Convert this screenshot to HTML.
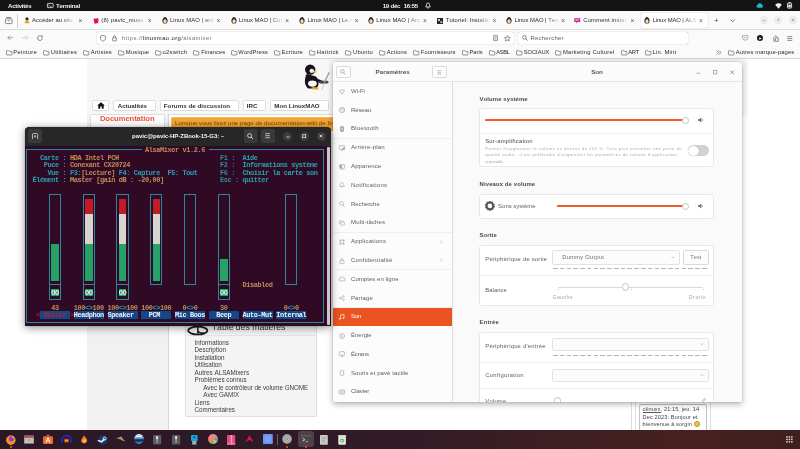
<!DOCTYPE html>
<html lang="fr"><head><meta charset="utf-8"><title>Linux MAO | ALSAMixer</title>
<style>
html,body{margin:0;padding:0}
body{width:800px;height:449px;overflow:hidden;position:relative;background:#fff;font-family:"Liberation Sans",sans-serif;font-kerning:none;-webkit-font-smoothing:antialiased}
#root{position:absolute;left:0;top:0;width:800px;height:449px;overflow:hidden;will-change:transform}
#root div,#root span.t,#root svg{position:absolute;box-sizing:border-box}
span.t{white-space:pre;display:block}
svg{overflow:visible}
</style></head><body><div id="root">
<div style="left:87.2px;top:58.5px;width:661px;height:56px;background:#f7f7f7;"></div>
<div style="left:87.2px;top:114px;width:81.3px;height:317px;background:#f1f1f1;"></div>
<div style="left:168.2px;top:114px;width:0.7px;height:317px;background:#d6d6d6;"></div>
<div style="left:91.9px;top:100.2px;width:17.5px;height:10.8px;background:#fff;border:0.6px solid #dcdcdc;border-radius:1.6px;"></div>
<svg style="left:96.6px;top:102.2px;" width="8" height="7" viewBox="0 0 8 7"><path d="M4 0.3 L0.2 3.6 H1.3 V6.8 H3.2 V4.6 H4.8 V6.8 H6.7 V3.6 H7.8 Z" fill="#111"/></svg>
<div style="left:113.4px;top:100.2px;width:42.3px;height:10.8px;background:#fff;border:0.6px solid #dcdcdc;border-radius:1.6px;"></div>
<span class="t" style="left:117.7px;top:102.08px;font-size:6.2px;line-height:7.44px;color:#333;font-weight:700;letter-spacing:-0.03px;">Actualités</span>
<div style="left:159.7px;top:100.2px;width:78.9px;height:10.8px;background:#fff;border:0.6px solid #dcdcdc;border-radius:1.6px;"></div>
<span class="t" style="left:163.8px;top:102.08px;font-size:6.2px;line-height:7.44px;color:#333;font-weight:700;letter-spacing:0.03px;">Forums de discussion</span>
<div style="left:242.5px;top:100.2px;width:23.7px;height:10.8px;background:#fff;border:0.6px solid #dcdcdc;border-radius:1.6px;"></div>
<span class="t" style="left:246.7px;top:102.08px;font-size:6.2px;line-height:7.44px;color:#333;font-weight:700;letter-spacing:0.01px;">IRC</span>
<div style="left:270.1px;top:100.2px;width:58.5px;height:10.8px;background:#fff;border:0.6px solid #dcdcdc;border-radius:1.6px;"></div>
<span class="t" style="left:274.3px;top:102.08px;font-size:6.2px;line-height:7.44px;color:#333;font-weight:700;letter-spacing:0px;">Mon LinuxMAO</span>
<div style="left:89.8px;top:113.6px;width:74.9px;height:20px;background:#fff;border:0.6px solid #dedede;border-radius:1.5px 1.5px 0 0;"></div>
<span class="t" style="left:99.9px;top:113.84px;font-size:7.6px;line-height:9.12px;color:#f0503c;font-weight:700;letter-spacing:-0.05px;">Documentation</span>
<div style="left:168.6px;top:114px;width:574px;height:0.7px;background:#dcdcdc;"></div>
<div style="left:171.2px;top:116.5px;width:175px;height:14px;background:#f6a730;border:0.8px solid #f3b55e;border-radius:1.2px;overflow:hidden;"></div>
<span class="t" style="left:175px;top:118.68px;font-size:6.2px;line-height:7.44px;color:#6e4a18;">Lorsque vous lisez une page de documentation-wiki de linuxmao.org, vous</span>
<svg style="left:300px;top:62px;" width="34" height="32" viewBox="300 62 34 32"><circle cx="310.2" cy="69.6" r="5.2" fill="#15131c"/><ellipse cx="311.8" cy="70.9" rx="2.3" ry="2.1" fill="#f4f4f4"/><path d="M313.9 70.6 L317.4 72 L314 73.2z" fill="#f4a51c"/><path d="M307.2 74 C304 78 304 85 308 88.4 L316 88.6 C319.5 86 319.5 80 316 76.5 Z" fill="#15131c"/><ellipse cx="312.4" cy="83.6" rx="4.4" ry="3.1" fill="#f7f7f7"/><path d="M307 76 L321.8 82" stroke="#15131c" stroke-width="2.8" stroke-linecap="round"/><path d="M320.4 82.2 h6.6" stroke="#4a4a4e" stroke-width="2.8" stroke-linecap="round"/><path d="M329.3 72.3 L324.4 82.2" stroke="#9a9a9e" stroke-width="1.3"/><path d="M324.6 82.6 L321.8 90" stroke="#b4b4b8" stroke-width="0.7"/><path d="M311.5 87.2 h6.6 l0.6 2.3 h-6z" fill="#f4a51c"/></svg>
<div style="left:185px;top:320px;width:132.4px;height:97.3px;background:#f4f4f4;border:0.6px solid #e0e0e0;border-radius:1px;"></div>
<div style="left:185.5px;top:335px;width:131.4px;height:0.5px;background:#e6e6e6;"></div>
<span class="t" style="left:211.8px;top:322.24px;font-size:8.6px;line-height:10.32px;color:#333;letter-spacing:0.03px;">Table des matières</span>
<svg style="left:187.3px;top:324.6px;" width="22" height="10" viewBox="0 0 22 10"><ellipse cx="10.8" cy="5.6" rx="9.6" ry="3.9" fill="none" stroke="#1c1c1c" stroke-width="1.7"/><path d="M10.8 0.6 v9 M10.8 5.4 a4 3 0 0 0 6 2.2" stroke="#1c1c1c" stroke-width="1.4" fill="none"/></svg>
<span class="t" style="left:194.5px;top:338.82px;font-size:6.3px;line-height:7.56px;color:#404040;letter-spacing:-0.02px;">Informations</span>
<span class="t" style="left:194.5px;top:346.32px;font-size:6.3px;line-height:7.56px;color:#404040;">Description</span>
<span class="t" style="left:194.5px;top:353.82px;font-size:6.3px;line-height:7.56px;color:#404040;">Installation</span>
<span class="t" style="left:194.5px;top:361.32px;font-size:6.3px;line-height:7.56px;color:#404040;">Utilisation</span>
<span class="t" style="left:194.5px;top:368.82px;font-size:6.3px;line-height:7.56px;color:#404040;">Autres ALSAMixers</span>
<span class="t" style="left:194.5px;top:376.32px;font-size:6.3px;line-height:7.56px;color:#404040;">Problèmes connus</span>
<span class="t" style="left:203.2px;top:383.82px;font-size:6.3px;line-height:7.56px;color:#404040;letter-spacing:-0.05px;">Avec le contrôleur de volume GNOME</span>
<span class="t" style="left:203.2px;top:391.32px;font-size:6.3px;line-height:7.56px;color:#404040;">Avec GAMIX</span>
<span class="t" style="left:194.5px;top:398.82px;font-size:6.3px;line-height:7.56px;color:#404040;">Liens</span>
<span class="t" style="left:194.5px;top:406.32px;font-size:6.3px;line-height:7.56px;color:#404040;letter-spacing:-0.04px;">Commentaires</span>
<div style="left:631px;top:395px;width:0.6px;height:35px;background:#ddd;"></div>
<div style="left:635.4px;top:395px;width:0.6px;height:35px;background:#e2e2e2;"></div>
<div style="left:710.4px;top:395px;width:0.6px;height:35px;background:#ddd;"></div>
<div style="left:639.4px;top:403.7px;width:67.5px;height:30px;background:#fff;border:0.7px solid #c4c4c4;border-radius:2px;"></div>
<span class="t" style="left:642.6px;top:406.34px;font-size:5.6px;line-height:6.72px;color:#444;letter-spacing:0.09px;">olinuxx, 21:15, jeu. 14</span>
<div style="left:642.6px;top:412.3px;width:18.8px;height:0.5px;background:#555;"></div>
<span class="t" style="left:642.6px;top:413.54px;font-size:5.6px;line-height:6.72px;color:#444;letter-spacing:0.12px;">Dec 2023: Bonjour et</span>
<span class="t" style="left:642.6px;top:420.94px;font-size:5.6px;line-height:6.72px;color:#444;letter-spacing:0.12px;">bienvenue à sorgin</span>
<div style="left:694.3px;top:421.1px;width:6px;height:6px;background:#f3c93a;border-radius:50%;border:0.4px solid #b8902a;"></div>
<div style="left:0px;top:0px;width:800px;height:10.7px;background:#141414;"></div>
<span class="t" style="left:8px;top:1.59px;font-size:6.1px;line-height:7.32px;color:#f2f2f2;font-weight:700;letter-spacing:-0.22px;">Activités</span>
<svg style="left:47.2px;top:3.3px;" width="6.6" height="5" viewBox="0 0 6.6 5"><rect x="0.4" y="0.4" width="5.8" height="4.2" rx="0.7" fill="none" stroke="#eee" stroke-width="0.8"/><path d="M1.5 1.5 l1.1 0.9 l-1.1 0.9 M3.2 3.4 h1.5" stroke="#eee" stroke-width="0.6" fill="none"/></svg>
<span class="t" style="left:56px;top:1.59px;font-size:6.1px;line-height:7.32px;color:#f2f2f2;font-weight:700;letter-spacing:-0.18px;">Terminal</span>
<span class="t" style="left:382.7px;top:1.59px;font-size:6.1px;line-height:7.32px;color:#f2f2f2;font-weight:700;letter-spacing:-0.25px;">19 déc</span>
<span class="t" style="left:403.7px;top:1.59px;font-size:6.1px;line-height:7.32px;color:#f2f2f2;font-weight:700;letter-spacing:-0.26px;">16:55</span>
<svg style="left:425.4px;top:2px;" width="6" height="7.2" viewBox="0 0 6 7.2"><path d="M3 0.9 C1.8 0.9 1.5 2 1.5 3.2 L0.7 5 H5.3 L4.5 3.2 C4.5 2 4.2 0.9 3 0.9 Z" fill="none" stroke="#eee" stroke-width="0.85" stroke-linejoin="round"/><path d="M2.3 6 h1.4" stroke="#eee" stroke-width="0.9"/></svg>
<svg style="left:755.6px;top:3.2px;" width="8" height="4.8" viewBox="0 0 8 4.8"><path d="M1.7 4.7 a1.55 1.55 0 0 1 0 -3 a2.3 2.3 0 0 1 4.4 0.4 a1.35 1.35 0 0 1 -0.2 2.6 z" fill="#1fb8d4"/></svg>
<svg style="left:774.5px;top:2.8px;" width="7" height="6" viewBox="0 0 7 6"><path d="M3.5 5.7 L0.2 1.8 A5 5 0 0 1 6.8 1.8 Z" fill="#f2f2f2"/></svg>
<svg style="left:787px;top:2px;" width="5.2" height="6.6" viewBox="0 0 5.2 6.6"><rect x="0.5" y="1" width="4.1" height="5.1" rx="0.7" fill="none" stroke="#f2f2f2" stroke-width="0.9"/><rect x="1.6" y="0.1" width="1.9" height="0.9" fill="#f2f2f2"/><rect x="1.3" y="2.6" width="2.5" height="2.7" fill="#f2f2f2"/></svg>
<div style="left:0px;top:10.7px;width:800px;height:47.8px;background:#fafafa;"></div>
<div style="left:0px;top:29px;width:800px;height:0.6px;background:#dcdcdc;"></div>
<div style="left:0px;top:58.2px;width:800px;height:0.6px;background:#d4d4d4;"></div>
<svg style="left:5px;top:17px;" width="7.5" height="7" viewBox="0 0 7.5 7"><rect x="0.4" y="1.8" width="6.7" height="4.8" rx="0.9" fill="none" stroke="#5b5b66" stroke-width="0.75"/><path d="M1.3 0.5 h4.9" stroke="#5b5b66" stroke-width="0.75"/><path d="M2.6 3.8 h2.3" stroke="#5b5b66" stroke-width="0.7"/></svg>
<div style="left:17.3px;top:14px;width:0.6px;height:14px;background:#d0d0d0;"></div>
<div style="left:640.5px;top:12.6px;width:67.5px;height:15.4px;background:#fff;border-radius:1.8px;box-shadow:0 0 1px rgba(0,0,0,.45);"></div>
<svg style="left:24px;top:17.3px;" width="6" height="6.5" viewBox="0 0 6 6.5"><circle cx="3" cy="1.9" r="1.6" fill="#3a2a1a"/><path d="M0.6 6.2 a2.4 2.6 0 0 1 4.8 0z" fill="#e8a23a"/></svg>
<span class="t" style="left:32px;top:17.46px;font-size:5.9px;line-height:7.08px;color:#2b2b33;letter-spacing:0.02px;-webkit-mask-image:linear-gradient(to right,#000 72%,rgba(0,0,0,.15) 100%);mask-image:linear-gradient(to right,#000 72%,rgba(0,0,0,.15) 100%);">Accéder au site</span>
<span class="t" style="left:78.47px;top:17.04px;font-size:6.6px;line-height:7.92px;color:#55555f;">×</span>
<svg style="left:92.5px;top:17.5px;" width="6" height="6" viewBox="0 0 6 6"><path d="M0.5 0.8 L5.5 0.3 L5.2 5 L1.5 5.7z" fill="#e0143c"/></svg>
<span class="t" style="left:101.3px;top:17.46px;font-size:5.9px;line-height:7.08px;color:#2b2b33;letter-spacing:0.16px;-webkit-mask-image:linear-gradient(to right,#000 72%,rgba(0,0,0,.15) 100%);mask-image:linear-gradient(to right,#000 72%,rgba(0,0,0,.15) 100%);">(8) pavic_muse</span>
<span class="t" style="left:147.77px;top:17.04px;font-size:6.6px;line-height:7.92px;color:#55555f;">×</span>
<svg style="left:162px;top:17.3px;" width="6" height="6.5" viewBox="0 0 6 6.5"><ellipse cx="3" cy="3.7" rx="2.6" ry="2.8" fill="#2a2622"/><circle cx="3" cy="1.8" r="1.7" fill="#2a2622"/><ellipse cx="3" cy="4.2" rx="1.5" ry="1.9" fill="#f0e6d6"/><path d="M2.2 2.3 h1.6 l-0.8 0.9z" fill="#f0a020"/><path d="M1 6.2 h4" stroke="#e89a20" stroke-width="0.7"/></svg>
<span class="t" style="left:170px;top:17.46px;font-size:5.9px;line-height:7.08px;color:#2b2b33;letter-spacing:0.08px;-webkit-mask-image:linear-gradient(to right,#000 72%,rgba(0,0,0,.15) 100%);mask-image:linear-gradient(to right,#000 72%,rgba(0,0,0,.15) 100%);">Linux MAO | ard</span>
<span class="t" style="left:216.47px;top:17.04px;font-size:6.6px;line-height:7.92px;color:#55555f;">×</span>
<svg style="left:230.5px;top:17.3px;" width="6" height="6.5" viewBox="0 0 6 6.5"><ellipse cx="3" cy="3.7" rx="2.6" ry="2.8" fill="#2a2622"/><circle cx="3" cy="1.8" r="1.7" fill="#2a2622"/><ellipse cx="3" cy="4.2" rx="1.5" ry="1.9" fill="#f0e6d6"/><path d="M2.2 2.3 h1.6 l-0.8 0.9z" fill="#f0a020"/><path d="M1 6.2 h4" stroke="#e89a20" stroke-width="0.7"/></svg>
<span class="t" style="left:238.8px;top:17.46px;font-size:5.9px;line-height:7.08px;color:#2b2b33;letter-spacing:0.01px;-webkit-mask-image:linear-gradient(to right,#000 72%,rgba(0,0,0,.15) 100%);mask-image:linear-gradient(to right,#000 72%,rgba(0,0,0,.15) 100%);">Linux MAO | Cor</span>
<span class="t" style="left:285.27px;top:17.04px;font-size:6.6px;line-height:7.92px;color:#55555f;">×</span>
<svg style="left:299.3px;top:17.3px;" width="6" height="6.5" viewBox="0 0 6 6.5"><ellipse cx="3" cy="3.7" rx="2.6" ry="2.8" fill="#2a2622"/><circle cx="3" cy="1.8" r="1.7" fill="#2a2622"/><ellipse cx="3" cy="4.2" rx="1.5" ry="1.9" fill="#f0e6d6"/><path d="M2.2 2.3 h1.6 l-0.8 0.9z" fill="#f0a020"/><path d="M1 6.2 h4" stroke="#e89a20" stroke-width="0.7"/></svg>
<span class="t" style="left:307.5px;top:17.46px;font-size:5.9px;line-height:7.08px;color:#2b2b33;letter-spacing:0.02px;-webkit-mask-image:linear-gradient(to right,#000 72%,rgba(0,0,0,.15) 100%);mask-image:linear-gradient(to right,#000 72%,rgba(0,0,0,.15) 100%);">Linux MAO | Le r</span>
<span class="t" style="left:354.77px;top:17.04px;font-size:6.6px;line-height:7.92px;color:#55555f;">×</span>
<svg style="left:368.3px;top:17.3px;" width="6" height="6.5" viewBox="0 0 6 6.5"><ellipse cx="3" cy="3.7" rx="2.6" ry="2.8" fill="#2a2622"/><circle cx="3" cy="1.8" r="1.7" fill="#2a2622"/><ellipse cx="3" cy="4.2" rx="1.5" ry="1.9" fill="#f0e6d6"/><path d="M2.2 2.3 h1.6 l-0.8 0.9z" fill="#f0a020"/><path d="M1 6.2 h4" stroke="#e89a20" stroke-width="0.7"/></svg>
<span class="t" style="left:376.3px;top:17.46px;font-size:5.9px;line-height:7.08px;color:#2b2b33;letter-spacing:0.06px;-webkit-mask-image:linear-gradient(to right,#000 72%,rgba(0,0,0,.15) 100%);mask-image:linear-gradient(to right,#000 72%,rgba(0,0,0,.15) 100%);">Linux MAO | Arc</span>
<span class="t" style="left:422.97px;top:17.04px;font-size:6.6px;line-height:7.92px;color:#55555f;">×</span>
<svg style="left:437px;top:17.5px;" width="6" height="6" viewBox="0 0 6 6"><rect x="0" y="0" width="6" height="6" fill="#23272b"/><path d="M1 1 h2 v2 h-2z M3.4 3.2 h1.8 v1.8 h-1.8z" fill="#cfd4d8"/></svg>
<span class="t" style="left:445.8px;top:17.46px;font-size:5.9px;line-height:7.08px;color:#2b2b33;letter-spacing:0.1px;-webkit-mask-image:linear-gradient(to right,#000 72%,rgba(0,0,0,.15) 100%);mask-image:linear-gradient(to right,#000 72%,rgba(0,0,0,.15) 100%);">Tutoriel: Installe</span>
<span class="t" style="left:492.47px;top:17.04px;font-size:6.6px;line-height:7.92px;color:#55555f;">×</span>
<svg style="left:506.3px;top:17.3px;" width="6" height="6.5" viewBox="0 0 6 6.5"><ellipse cx="3" cy="3.7" rx="2.6" ry="2.8" fill="#2a2622"/><circle cx="3" cy="1.8" r="1.7" fill="#2a2622"/><ellipse cx="3" cy="4.2" rx="1.5" ry="1.9" fill="#f0e6d6"/><path d="M2.2 2.3 h1.6 l-0.8 0.9z" fill="#f0a020"/><path d="M1 6.2 h4" stroke="#e89a20" stroke-width="0.7"/></svg>
<span class="t" style="left:514.5px;top:17.46px;font-size:5.9px;line-height:7.08px;color:#2b2b33;letter-spacing:-0.02px;-webkit-mask-image:linear-gradient(to right,#000 72%,rgba(0,0,0,.15) 100%);mask-image:linear-gradient(to right,#000 72%,rgba(0,0,0,.15) 100%);">Linux MAO | Ten</span>
<span class="t" style="left:561.27px;top:17.04px;font-size:6.6px;line-height:7.92px;color:#55555f;">×</span>
<svg style="left:574.3px;top:17.5px;" width="6.5" height="6" viewBox="0 0 6.5 6"><path d="M0.3 0.3 h5.9 v3.6 h-2.6 l-1.2 1.6 v-1.6 h-2.1z" fill="#d81b8c"/><path d="M1.4 1.6 h3.8 M1.4 2.6 h3" stroke="#fff" stroke-width="0.5"/></svg>
<span class="t" style="left:583.3px;top:17.46px;font-size:5.9px;line-height:7.08px;color:#2b2b33;letter-spacing:0.14px;-webkit-mask-image:linear-gradient(to right,#000 72%,rgba(0,0,0,.15) 100%);mask-image:linear-gradient(to right,#000 72%,rgba(0,0,0,.15) 100%);">Comment instal</span>
<span class="t" style="left:630.47px;top:17.04px;font-size:6.6px;line-height:7.92px;color:#55555f;">×</span>
<svg style="left:644.3px;top:17.3px;" width="6" height="6.5" viewBox="0 0 6 6.5"><ellipse cx="3" cy="3.7" rx="2.6" ry="2.8" fill="#2a2622"/><circle cx="3" cy="1.8" r="1.7" fill="#2a2622"/><ellipse cx="3" cy="4.2" rx="1.5" ry="1.9" fill="#f0e6d6"/><path d="M2.2 2.3 h1.6 l-0.8 0.9z" fill="#f0a020"/><path d="M1 6.2 h4" stroke="#e89a20" stroke-width="0.7"/></svg>
<span class="t" style="left:652.5px;top:17.46px;font-size:5.9px;line-height:7.08px;color:#2b2b33;letter-spacing:-0.09px;-webkit-mask-image:linear-gradient(to right,#000 72%,rgba(0,0,0,.15) 100%);mask-image:linear-gradient(to right,#000 72%,rgba(0,0,0,.15) 100%);">Linux MAO | ALS</span>
<span class="t" style="left:698.97px;top:17.04px;font-size:6.6px;line-height:7.92px;color:#55555f;">×</span>
<span class="t" style="left:713.96px;top:15.5px;font-size:8px;line-height:9.6px;color:#4a4a55;">+</span>
<svg style="left:730.3px;top:19px;" width="5.4" height="3.4" viewBox="0 0 5.4 3.4"><path d="M0.5 0.5 L2.7 2.7 L4.9 0.5" stroke="#4a4a55" stroke-width="0.75" fill="none"/></svg>
<div style="left:759.8px;top:16.3px;width:8px;height:8px;background:#ececec;border-radius:50%;"></div>
<div style="left:774px;top:16.3px;width:8px;height:8px;background:#ececec;border-radius:50%;"></div>
<div style="left:788.5px;top:16.3px;width:8px;height:8px;background:#ececec;border-radius:50%;"></div>
<svg style="left:761.8px;top:19.3px;" width="4" height="2" viewBox="0 0 4 2"><path d="M0.6 1.6 h2.8" stroke="#8a8a8a" stroke-width="0.6"/></svg>
<svg style="left:776px;top:18.3px;" width="4" height="4" viewBox="0 0 4 4"><path d="M1 3 L3 1 M1.6 1 H3 V2.4" stroke="#8a8a8a" stroke-width="0.55" fill="none"/></svg>
<svg style="left:790.5px;top:18.3px;" width="4" height="4" viewBox="0 0 4 4"><path d="M0.8 0.8 L3.2 3.2 M3.2 0.8 L0.8 3.2" stroke="#8a8a8a" stroke-width="0.6"/></svg>
<svg style="left:7px;top:35.3px;" width="6.5" height="5.4" viewBox="0 0 6.5 5.4"><path d="M6.2 2.7 H0.8 M3 0.5 L0.8 2.7 L3 4.9" stroke="#8c8c95" stroke-width="0.75" fill="none"/></svg>
<svg style="left:22px;top:35.3px;" width="6.5" height="5.4" viewBox="0 0 6.5 5.4"><path d="M0.3 2.7 H5.7 M3.5 0.5 L5.7 2.7 L3.5 4.9" stroke="#c9c9cf" stroke-width="0.75" fill="none"/></svg>
<svg style="left:37px;top:35px;" width="6.4" height="6.2" viewBox="0 0 6.4 6.2"><path d="M5.4 3.2 A2.4 2.4 0 1 1 4.6 1.3" stroke="#5b5b66" stroke-width="0.75" fill="none"/><path d="M5.7 0.3 v1.9 h-1.9z" fill="#5b5b66"/></svg>
<div style="left:96.5px;top:32.2px;width:417px;height:12.3px;background:#fff;border-radius:1.8px;box-shadow:0 0 0.8px rgba(0,0,0,.55);"></div>
<svg style="left:100.2px;top:35px;" width="6" height="6.6" viewBox="0 0 6 6.6"><path d="M3 0.4 L5.5 1.2 V3.2 C5.5 4.8 4.2 5.8 3 6.2 C1.8 5.8 0.5 4.8 0.5 3.2 V1.2 Z" fill="none" stroke="#5b5b66" stroke-width="0.7"/></svg>
<svg style="left:111.8px;top:35px;" width="5" height="6.4" viewBox="0 0 5 6.4"><rect x="0.6" y="2.8" width="3.8" height="3.1" rx="0.5" fill="none" stroke="#5b5b66" stroke-width="0.7"/><path d="M1.4 2.8 V1.8 a1.1 1.1 0 0 1 2.2 0 V2.8" fill="none" stroke="#5b5b66" stroke-width="0.7"/></svg>
<span class="t" style="left:121.8px;top:34.76px;font-size:5.9px;line-height:7.08px;color:#77777f;letter-spacing:0.44px;">https:</span>
<span class="t" style="left:138.9px;top:34.76px;font-size:5.9px;line-height:7.08px;color:#77777f;letter-spacing:0.3px;">//</span>
<span class="t" style="left:142.8px;top:34.76px;font-size:5.9px;line-height:7.08px;color:#1b1b22;letter-spacing:0.39px;">linuxmao.org</span>
<span class="t" style="left:181.2px;top:34.76px;font-size:5.9px;line-height:7.08px;color:#77777f;letter-spacing:0.39px;">/alsamixer</span>
<svg style="left:492.5px;top:35.2px;" width="5" height="6" viewBox="0 0 5 6"><rect x="0.5" y="0.4" width="4" height="5.2" rx="0.5" fill="none" stroke="#5b5b66" stroke-width="0.6"/><path d="M1.4 1.8 h2.2 M1.4 3 h2.2 M1.4 4.2 h2.2" stroke="#5b5b66" stroke-width="0.45"/></svg>
<svg style="left:503.8px;top:34.8px;" width="6.6" height="6.4" viewBox="0 0 6.6 6.4"><path d="M3.3 0.5 L4.15 2.4 L6.2 2.6 L4.65 4 L5.1 6 L3.3 4.95 L1.5 6 L1.95 4 L0.4 2.6 L2.45 2.4 Z" fill="none" stroke="#5b5b66" stroke-width="0.65" stroke-linejoin="round"/></svg>
<div style="left:518px;top:32.2px;width:170px;height:12.3px;background:#fff;border-radius:1.8px;box-shadow:0 0 0.8px rgba(0,0,0,.55);"></div>
<svg style="left:522px;top:35.3px;" width="6" height="6" viewBox="0 0 6 6"><circle cx="2.4" cy="2.4" r="1.8" fill="none" stroke="#5b5b66" stroke-width="0.75"/><path d="M3.7 3.7 L5.6 5.6" stroke="#5b5b66" stroke-width="0.8"/></svg>
<span class="t" style="left:530.5px;top:34.76px;font-size:5.9px;line-height:7.08px;color:#5b5b66;letter-spacing:0.28px;">Rechercher</span>
<svg style="left:742px;top:35.3px;" width="6.4" height="5.6" viewBox="0 0 6.4 5.6"><path d="M0.5 0.7 h5.4 v1.8 a2.7 2.7 0 0 1 -5.4 0z" fill="none" stroke="#8c8c95" stroke-width="0.7"/><path d="M1.9 2.1 L3.2 3.2 L4.5 2.1" stroke="#8c8c95" stroke-width="0.6" fill="none"/></svg>
<div style="left:756.8px;top:34.8px;width:6.6px;height:6.6px;background:#17171c;border-radius:50%;"></div>
<svg style="left:758.6px;top:36.5px;" width="3" height="3" viewBox="0 0 3 3"><path d="M0.2 0.2 L2.8 1.5 L0.2 2.8z" fill="#fff"/></svg>
<svg style="left:772.5px;top:34.8px;" width="6" height="7" viewBox="0 0 6 7"><path d="M1.8 6.3 H0.8 V2.6 L2.6 0.6 L4.3 2.6" fill="none" stroke="#5b5b66" stroke-width="0.7"/><path d="M2.4 6.3 V3 h2.9 v3.3z" fill="none" stroke="#5b5b66" stroke-width="0.7"/></svg>
<svg style="left:787.3px;top:35.6px;" width="5.6" height="5" viewBox="0 0 5.6 5"><path d="M0.3 0.6 h5 M0.3 2.5 h5 M0.3 4.4 h5" stroke="#5b5b66" stroke-width="0.7"/></svg>
<svg style="left:5.5px;top:49.6px;" width="6.2" height="5.4" viewBox="0 0 6.2 5.4"><path d="M0.5 1.2 a0.6 0.6 0 0 1 0.6 -0.6 h1.6 l0.7 0.8 h2 a0.5 0.5 0 0 1 0.5 0.5 v2.6 a0.5 0.5 0 0 1 -0.5 0.5 h-4.3 a0.6 0.6 0 0 1 -0.6 -0.6z" fill="none" stroke="#5b5b66" stroke-width="0.65"/></svg>
<span class="t" style="left:13.3px;top:48.92px;font-size:5.8px;line-height:6.96px;color:#2b2b33;letter-spacing:0.27px;">Peinture</span>
<svg style="left:42.5px;top:49.6px;" width="6.2" height="5.4" viewBox="0 0 6.2 5.4"><path d="M0.5 1.2 a0.6 0.6 0 0 1 0.6 -0.6 h1.6 l0.7 0.8 h2 a0.5 0.5 0 0 1 0.5 0.5 v2.6 a0.5 0.5 0 0 1 -0.5 0.5 h-4.3 a0.6 0.6 0 0 1 -0.6 -0.6z" fill="none" stroke="#5b5b66" stroke-width="0.65"/></svg>
<span class="t" style="left:50.8px;top:48.92px;font-size:5.8px;line-height:6.96px;color:#2b2b33;letter-spacing:0.22px;">Utilitaires</span>
<svg style="left:83.3px;top:49.6px;" width="6.2" height="5.4" viewBox="0 0 6.2 5.4"><path d="M0.5 1.2 a0.6 0.6 0 0 1 0.6 -0.6 h1.6 l0.7 0.8 h2 a0.5 0.5 0 0 1 0.5 0.5 v2.6 a0.5 0.5 0 0 1 -0.5 0.5 h-4.3 a0.6 0.6 0 0 1 -0.6 -0.6z" fill="none" stroke="#5b5b66" stroke-width="0.65"/></svg>
<span class="t" style="left:90.8px;top:48.92px;font-size:5.8px;line-height:6.96px;color:#2b2b33;letter-spacing:0.23px;">Artistes</span>
<svg style="left:118.3px;top:49.6px;" width="6.2" height="5.4" viewBox="0 0 6.2 5.4"><path d="M0.5 1.2 a0.6 0.6 0 0 1 0.6 -0.6 h1.6 l0.7 0.8 h2 a0.5 0.5 0 0 1 0.5 0.5 v2.6 a0.5 0.5 0 0 1 -0.5 0.5 h-4.3 a0.6 0.6 0 0 1 -0.6 -0.6z" fill="none" stroke="#5b5b66" stroke-width="0.65"/></svg>
<span class="t" style="left:125.8px;top:48.92px;font-size:5.8px;line-height:6.96px;color:#2b2b33;letter-spacing:0.23px;">Musique</span>
<svg style="left:155px;top:49.6px;" width="6.2" height="5.4" viewBox="0 0 6.2 5.4"><path d="M0.5 1.2 a0.6 0.6 0 0 1 0.6 -0.6 h1.6 l0.7 0.8 h2 a0.5 0.5 0 0 1 0.5 0.5 v2.6 a0.5 0.5 0 0 1 -0.5 0.5 h-4.3 a0.6 0.6 0 0 1 -0.6 -0.6z" fill="none" stroke="#5b5b66" stroke-width="0.65"/></svg>
<span class="t" style="left:162.5px;top:48.92px;font-size:5.8px;line-height:6.96px;color:#2b2b33;letter-spacing:0.31px;">o2switch</span>
<svg style="left:193.3px;top:49.6px;" width="6.2" height="5.4" viewBox="0 0 6.2 5.4"><path d="M0.5 1.2 a0.6 0.6 0 0 1 0.6 -0.6 h1.6 l0.7 0.8 h2 a0.5 0.5 0 0 1 0.5 0.5 v2.6 a0.5 0.5 0 0 1 -0.5 0.5 h-4.3 a0.6 0.6 0 0 1 -0.6 -0.6z" fill="none" stroke="#5b5b66" stroke-width="0.65"/></svg>
<span class="t" style="left:201.3px;top:48.92px;font-size:5.8px;line-height:6.96px;color:#2b2b33;letter-spacing:0.03px;">Finances</span>
<svg style="left:230.5px;top:49.6px;" width="6.2" height="5.4" viewBox="0 0 6.2 5.4"><path d="M0.5 1.2 a0.6 0.6 0 0 1 0.6 -0.6 h1.6 l0.7 0.8 h2 a0.5 0.5 0 0 1 0.5 0.5 v2.6 a0.5 0.5 0 0 1 -0.5 0.5 h-4.3 a0.6 0.6 0 0 1 -0.6 -0.6z" fill="none" stroke="#5b5b66" stroke-width="0.65"/></svg>
<span class="t" style="left:238.3px;top:48.92px;font-size:5.8px;line-height:6.96px;color:#2b2b33;letter-spacing:0.11px;">WordPress</span>
<svg style="left:274.3px;top:49.6px;" width="6.2" height="5.4" viewBox="0 0 6.2 5.4"><path d="M0.5 1.2 a0.6 0.6 0 0 1 0.6 -0.6 h1.6 l0.7 0.8 h2 a0.5 0.5 0 0 1 0.5 0.5 v2.6 a0.5 0.5 0 0 1 -0.5 0.5 h-4.3 a0.6 0.6 0 0 1 -0.6 -0.6z" fill="none" stroke="#5b5b66" stroke-width="0.65"/></svg>
<span class="t" style="left:281.8px;top:48.92px;font-size:5.8px;line-height:6.96px;color:#2b2b33;letter-spacing:0.15px;">Ecriture</span>
<svg style="left:309.3px;top:49.6px;" width="6.2" height="5.4" viewBox="0 0 6.2 5.4"><path d="M0.5 1.2 a0.6 0.6 0 0 1 0.6 -0.6 h1.6 l0.7 0.8 h2 a0.5 0.5 0 0 1 0.5 0.5 v2.6 a0.5 0.5 0 0 1 -0.5 0.5 h-4.3 a0.6 0.6 0 0 1 -0.6 -0.6z" fill="none" stroke="#5b5b66" stroke-width="0.65"/></svg>
<span class="t" style="left:316.8px;top:48.92px;font-size:5.8px;line-height:6.96px;color:#2b2b33;letter-spacing:0.29px;">Hattrick</span>
<svg style="left:345px;top:49.6px;" width="6.2" height="5.4" viewBox="0 0 6.2 5.4"><path d="M0.5 1.2 a0.6 0.6 0 0 1 0.6 -0.6 h1.6 l0.7 0.8 h2 a0.5 0.5 0 0 1 0.5 0.5 v2.6 a0.5 0.5 0 0 1 -0.5 0.5 h-4.3 a0.6 0.6 0 0 1 -0.6 -0.6z" fill="none" stroke="#5b5b66" stroke-width="0.65"/></svg>
<span class="t" style="left:353px;top:48.92px;font-size:5.8px;line-height:6.96px;color:#2b2b33;letter-spacing:0.22px;">Ubuntu</span>
<svg style="left:378.8px;top:49.6px;" width="6.2" height="5.4" viewBox="0 0 6.2 5.4"><path d="M0.5 1.2 a0.6 0.6 0 0 1 0.6 -0.6 h1.6 l0.7 0.8 h2 a0.5 0.5 0 0 1 0.5 0.5 v2.6 a0.5 0.5 0 0 1 -0.5 0.5 h-4.3 a0.6 0.6 0 0 1 -0.6 -0.6z" fill="none" stroke="#5b5b66" stroke-width="0.65"/></svg>
<span class="t" style="left:386.8px;top:48.92px;font-size:5.8px;line-height:6.96px;color:#2b2b33;letter-spacing:0.17px;">Actions</span>
<svg style="left:413.3px;top:49.6px;" width="6.2" height="5.4" viewBox="0 0 6.2 5.4"><path d="M0.5 1.2 a0.6 0.6 0 0 1 0.6 -0.6 h1.6 l0.7 0.8 h2 a0.5 0.5 0 0 1 0.5 0.5 v2.6 a0.5 0.5 0 0 1 -0.5 0.5 h-4.3 a0.6 0.6 0 0 1 -0.6 -0.6z" fill="none" stroke="#5b5b66" stroke-width="0.65"/></svg>
<span class="t" style="left:420.8px;top:48.92px;font-size:5.8px;line-height:6.96px;color:#2b2b33;letter-spacing:0.1px;">Fournisseurs</span>
<svg style="left:461.8px;top:49.6px;" width="6.2" height="5.4" viewBox="0 0 6.2 5.4"><path d="M0.5 1.2 a0.6 0.6 0 0 1 0.6 -0.6 h1.6 l0.7 0.8 h2 a0.5 0.5 0 0 1 0.5 0.5 v2.6 a0.5 0.5 0 0 1 -0.5 0.5 h-4.3 a0.6 0.6 0 0 1 -0.6 -0.6z" fill="none" stroke="#5b5b66" stroke-width="0.65"/></svg>
<span class="t" style="left:469.5px;top:48.92px;font-size:5.8px;line-height:6.96px;color:#2b2b33;letter-spacing:-0.04px;">Paris</span>
<svg style="left:488.8px;top:49.6px;" width="6.2" height="5.4" viewBox="0 0 6.2 5.4"><path d="M0.5 1.2 a0.6 0.6 0 0 1 0.6 -0.6 h1.6 l0.7 0.8 h2 a0.5 0.5 0 0 1 0.5 0.5 v2.6 a0.5 0.5 0 0 1 -0.5 0.5 h-4.3 a0.6 0.6 0 0 1 -0.6 -0.6z" fill="none" stroke="#5b5b66" stroke-width="0.65"/></svg>
<span class="t" style="left:496.3px;top:48.92px;font-size:5.8px;line-height:6.96px;color:#2b2b33;letter-spacing:-0.45px;">ASBL</span>
<svg style="left:515.8px;top:49.6px;" width="6.2" height="5.4" viewBox="0 0 6.2 5.4"><path d="M0.5 1.2 a0.6 0.6 0 0 1 0.6 -0.6 h1.6 l0.7 0.8 h2 a0.5 0.5 0 0 1 0.5 0.5 v2.6 a0.5 0.5 0 0 1 -0.5 0.5 h-4.3 a0.6 0.6 0 0 1 -0.6 -0.6z" fill="none" stroke="#5b5b66" stroke-width="0.65"/></svg>
<span class="t" style="left:523.8px;top:48.92px;font-size:5.8px;line-height:6.96px;color:#2b2b33;letter-spacing:-0.08px;">SOCIAUX</span>
<svg style="left:555px;top:49.6px;" width="6.2" height="5.4" viewBox="0 0 6.2 5.4"><path d="M0.5 1.2 a0.6 0.6 0 0 1 0.6 -0.6 h1.6 l0.7 0.8 h2 a0.5 0.5 0 0 1 0.5 0.5 v2.6 a0.5 0.5 0 0 1 -0.5 0.5 h-4.3 a0.6 0.6 0 0 1 -0.6 -0.6z" fill="none" stroke="#5b5b66" stroke-width="0.65"/></svg>
<span class="t" style="left:563px;top:48.92px;font-size:5.8px;line-height:6.96px;color:#2b2b33;letter-spacing:0.25px;">Marketing Culturel</span>
<svg style="left:620.5px;top:49.6px;" width="6.2" height="5.4" viewBox="0 0 6.2 5.4"><path d="M0.5 1.2 a0.6 0.6 0 0 1 0.6 -0.6 h1.6 l0.7 0.8 h2 a0.5 0.5 0 0 1 0.5 0.5 v2.6 a0.5 0.5 0 0 1 -0.5 0.5 h-4.3 a0.6 0.6 0 0 1 -0.6 -0.6z" fill="none" stroke="#5b5b66" stroke-width="0.65"/></svg>
<span class="t" style="left:628.3px;top:48.92px;font-size:5.8px;line-height:6.96px;color:#2b2b33;letter-spacing:-0.36px;">ART</span>
<svg style="left:645px;top:49.6px;" width="6.2" height="5.4" viewBox="0 0 6.2 5.4"><path d="M0.5 1.2 a0.6 0.6 0 0 1 0.6 -0.6 h1.6 l0.7 0.8 h2 a0.5 0.5 0 0 1 0.5 0.5 v2.6 a0.5 0.5 0 0 1 -0.5 0.5 h-4.3 a0.6 0.6 0 0 1 -0.6 -0.6z" fill="none" stroke="#5b5b66" stroke-width="0.65"/></svg>
<span class="t" style="left:652.5px;top:48.92px;font-size:5.8px;line-height:6.96px;color:#2b2b33;letter-spacing:0.21px;">Lin. Mint</span>
<svg style="left:727.5px;top:49.6px;" width="6.2" height="5.4" viewBox="0 0 6.2 5.4"><path d="M0.5 1.2 a0.6 0.6 0 0 1 0.6 -0.6 h1.6 l0.7 0.8 h2 a0.5 0.5 0 0 1 0.5 0.5 v2.6 a0.5 0.5 0 0 1 -0.5 0.5 h-4.3 a0.6 0.6 0 0 1 -0.6 -0.6z" fill="none" stroke="#5b5b66" stroke-width="0.65"/></svg>
<span class="t" style="left:735.8px;top:48.92px;font-size:5.8px;line-height:6.96px;color:#2b2b33;letter-spacing:0.15px;">Autres marque-pages</span>
<svg style="left:715.5px;top:50px;" width="5.6" height="5" viewBox="0 0 5.6 5"><path d="M0.6 0.5 L2.6 2.5 L0.6 4.5 M3 0.5 L5 2.5 L3 4.5" stroke="#5b5b66" stroke-width="0.7" fill="none"/></svg>
<div style="left:332.8px;top:62px;width:409.2px;height:340px;background:#fafafa;border-radius:3.2px 3.2px 0 0;box-shadow:0 1.2px 6px rgba(0,0,0,.32),0 0 0.8px rgba(0,0,0,.5);overflow:hidden">
<div style="left:0px;top:0px;width:119.4px;height:340px;background:#fcfcfc;"></div>
<div style="left:119.2px;top:0px;width:0.6px;height:340px;background:#dedede;"></div>
<div style="left:0px;top:0px;width:410px;height:19.8px;background:#fbfbfb;"></div>
<div style="left:0px;top:19px;width:410px;height:1px;background:#e6e6e6;"></div>
<div style="left:3.2px;top:3.6px;width:14.6px;height:12.5px;background:#fdfdfd;border:0.6px solid #dadada;border-radius:1.8px;"></div>
<svg style="left:7.5px;top:6.8px;" width="6" height="6" viewBox="0 0 6 6"><circle cx="2.4" cy="2.4" r="1.8" fill="none" stroke="#9a9a9a" stroke-width="0.7"/><path d="M3.7 3.7 L5.5 5.5" stroke="#9a9a9a" stroke-width="0.75"/></svg>
<span class="t" style="left:42.8px;top:6.03px;font-size:6.2px;line-height:7.44px;color:#55555a;font-weight:700;letter-spacing:0.04px;">Paramètres</span>
<div style="left:99.5px;top:3.6px;width:14.6px;height:12.5px;background:#fdfdfd;border:0.6px solid #dadada;border-radius:1.8px;"></div>
<svg style="left:104.5px;top:7.6px;" width="4.6" height="4.6" viewBox="0 0 4.6 4.6"><path d="M0.3 0.6 h4 M0.3 2.3 h4 M0.3 4 h4" stroke="#9a9a9a" stroke-width="0.6"/></svg>
<span class="t" style="left:258.36px;top:6.03px;font-size:6.2px;line-height:7.44px;color:#55555a;font-weight:700;">Son</span>
<svg style="left:363.7px;top:9.5px;" width="4.6" height="2" viewBox="0 0 4.6 2"><path d="M0.5 1.2 h3.6" stroke="#8a8a8a" stroke-width="0.6"/></svg>
<svg style="left:380px;top:7.6px;" width="4.6" height="4.6" viewBox="0 0 4.6 4.6"><rect x="0.6" y="0.6" width="3.3" height="3.3" fill="none" stroke="#8a8a8a" stroke-width="0.6"/></svg>
<svg style="left:396.9px;top:7.6px;" width="4.6" height="4.6" viewBox="0 0 4.6 4.6"><path d="M0.6 0.6 L3.9 3.9 M3.9 0.6 L0.6 3.9" stroke="#707070" stroke-width="0.7"/></svg>
<svg style="left:6.5px;top:26.5px;" width="6" height="6" viewBox="0 0 6 6"><path d="M3 5.2 L0.4 1.8 A4 4 0 0 1 5.6 1.8 Z" fill="none" stroke="#9a9a9a" stroke-width="0.6"/></svg>
<span class="t" style="left:18.2px;top:25.92px;font-size:6.05px;line-height:7.26px;color:#5e5e5e;letter-spacing:-0.04px;">Wi-Fi</span>
<svg style="left:6.5px;top:45.28px;" width="6" height="6" viewBox="0 0 6 6"><circle cx="3" cy="3" r="2.6" fill="none" stroke="#9a9a9a" stroke-width="0.65"/><path d="M1.4 1.6 l1 1.2 l-0.6 1.4 M3.6 1 l0.6 1.4 l-0.8 1 l0.8 1.4" fill="none" stroke="#9a9a9a" stroke-width="0.5"/></svg>
<span class="t" style="left:18.2px;top:44.7px;font-size:6.05px;line-height:7.26px;color:#5e5e5e;letter-spacing:-0.15px;">Réseau</span>
<svg style="left:6.5px;top:64.06px;" width="6" height="6" viewBox="0 0 6 6"><rect x="1.2" y="0.3" width="3.6" height="5.4" rx="0.8" fill="#9a9a9a"/><path d="M2.2 2 L3.8 4 L3 4.7 V1.3 L3.8 2 L2.2 4" stroke="#fff" stroke-width="0.35" fill="none"/></svg>
<span class="t" style="left:18.2px;top:63.48px;font-size:6.05px;line-height:7.26px;color:#5e5e5e;letter-spacing:0.26px;">Bluetooth</span>
<svg style="left:6.5px;top:82.84px;" width="6" height="6" viewBox="0 0 6 6"><rect x="0.4" y="0.6" width="5.2" height="3.8" rx="0.5" fill="none" stroke="#9a9a9a" stroke-width="0.6"/><path d="M2 5.5 h2" stroke="#9a9a9a" stroke-width="0.6"/><path d="M3.6 2.6 h2.2 v2 h-2.2z" fill="#9a9a9a"/></svg>
<span class="t" style="left:18.2px;top:82.26px;font-size:6.05px;line-height:7.26px;color:#5e5e5e;letter-spacing:0.19px;">Arrière-plan</span>
<svg style="left:6.5px;top:101.62px;" width="6" height="6" viewBox="0 0 6 6"><rect x="0.4" y="0.6" width="5.2" height="3.8" rx="0.5" fill="none" stroke="#9a9a9a" stroke-width="0.6"/><path d="M1 1.2 h2 v2.6 h-2z" fill="#9a9a9a"/><path d="M2 5.5 h2" stroke="#9a9a9a" stroke-width="0.6"/></svg>
<span class="t" style="left:18.2px;top:101.04px;font-size:6.05px;line-height:7.26px;color:#5e5e5e;letter-spacing:0.12px;">Apparence</span>
<svg style="left:6.5px;top:120.4px;" width="6" height="6" viewBox="0 0 6 6"><path d="M3 0.5 C1.7 0.5 1.4 1.7 1.4 2.8 L0.7 4.4 H5.3 L4.6 2.8 C4.6 1.7 4.3 0.5 3 0.5 Z" fill="none" stroke="#9a9a9a" stroke-width="0.55"/><path d="M2.4 5.2 h1.2" stroke="#9a9a9a" stroke-width="0.6"/></svg>
<span class="t" style="left:18.2px;top:119.82px;font-size:6.05px;line-height:7.26px;color:#5e5e5e;letter-spacing:0.26px;">Notifications</span>
<svg style="left:6.5px;top:139.18px;" width="6" height="6" viewBox="0 0 6 6"><circle cx="2.5" cy="2.5" r="1.9" fill="none" stroke="#9a9a9a" stroke-width="0.6"/><path d="M3.9 3.9 L5.6 5.6" stroke="#9a9a9a" stroke-width="0.65"/></svg>
<span class="t" style="left:18.2px;top:138.6px;font-size:6.05px;line-height:7.26px;color:#5e5e5e;letter-spacing:-0.06px;">Recherche</span>
<svg style="left:6.5px;top:157.96px;" width="6" height="6" viewBox="0 0 6 6"><rect x="0.4" y="0.8" width="3.8" height="3" rx="0.5" fill="none" stroke="#9a9a9a" stroke-width="0.55"/><rect x="1.8" y="2.2" width="3.8" height="3" rx="0.5" fill="#fcfcfc" stroke="#9a9a9a" stroke-width="0.55"/></svg>
<span class="t" style="left:18.2px;top:157.38px;font-size:6.05px;line-height:7.26px;color:#5e5e5e;letter-spacing:0.14px;">Multi-tâches</span>
<svg style="left:6.5px;top:176.74px;" width="6" height="6" viewBox="0 0 6 6"><path d="M0.6 0.6 h1.8 v1.8 h-1.8z M3.6 0.6 h1.8 v1.8 h-1.8z M0.6 3.6 h1.8 v1.8 h-1.8z M3.6 3.6 h1.8 v1.8 h-1.8z" fill="#9a9a9a" opacity=".8"/></svg>
<span class="t" style="left:18.2px;top:176.16px;font-size:6.05px;line-height:7.26px;color:#5e5e5e;letter-spacing:0.21px;">Applications</span>
<svg style="left:107.7px;top:177.54px;" width="3" height="4.4" viewBox="0 0 3 4.4"><path d="M0.6 0.4 L2.3 2.2 L0.6 4" stroke="#a8a8a8" stroke-width="0.55" fill="none"/></svg>
<svg style="left:6.5px;top:195.52px;" width="6" height="6" viewBox="0 0 6 6"><rect x="0.9" y="2.6" width="4.2" height="3" rx="0.5" fill="none" stroke="#9a9a9a" stroke-width="0.6"/><path d="M1.8 2.6 V1.7 a1.2 1.2 0 0 1 2.4 0 V2.6" fill="none" stroke="#9a9a9a" stroke-width="0.6"/></svg>
<span class="t" style="left:18.2px;top:194.94px;font-size:6.05px;line-height:7.26px;color:#5e5e5e;letter-spacing:0.22px;">Confidentialité</span>
<svg style="left:107.7px;top:196.32px;" width="3" height="4.4" viewBox="0 0 3 4.4"><path d="M0.6 0.4 L2.3 2.2 L0.6 4" stroke="#a8a8a8" stroke-width="0.55" fill="none"/></svg>
<svg style="left:6.5px;top:214.3px;" width="6" height="6" viewBox="0 0 6 6"><path d="M1.5 4.8 a1.4 1.4 0 0 1 0 -2.8 a1.9 1.9 0 0 1 3.6 0.3 a1.25 1.25 0 0 1 -0.2 2.5 z" fill="none" stroke="#9a9a9a" stroke-width="0.6"/></svg>
<span class="t" style="left:18.2px;top:213.72px;font-size:6.05px;line-height:7.26px;color:#5e5e5e;letter-spacing:0.03px;">Comptes en ligne</span>
<svg style="left:6.5px;top:233.08px;" width="6" height="6" viewBox="0 0 6 6"><circle cx="4.6" cy="1.2" r="0.8" fill="none" stroke="#9a9a9a" stroke-width="0.5"/><circle cx="1.2" cy="3" r="0.8" fill="none" stroke="#9a9a9a" stroke-width="0.5"/><circle cx="4.6" cy="4.8" r="0.8" fill="none" stroke="#9a9a9a" stroke-width="0.5"/><path d="M1.9 2.6 L3.9 1.6 M1.9 3.4 L3.9 4.4" stroke="#9a9a9a" stroke-width="0.5"/></svg>
<span class="t" style="left:18.2px;top:232.5px;font-size:6.05px;line-height:7.26px;color:#5e5e5e;letter-spacing:0.1px;">Partage</span>
<div style="left:0px;top:245.9px;width:119.4px;height:18.3px;background:#e95420;"></div>
<svg style="left:6.5px;top:251.86px;" width="6" height="6" viewBox="0 0 6 6"><path d="M1.6 4.6 V1 L5 0.4 V4" fill="none" stroke="#ffffff" stroke-width="0.65"/><ellipse cx="1" cy="4.7" rx="0.9" ry="0.7" fill="#ffffff"/><ellipse cx="4.4" cy="4.1" rx="0.9" ry="0.7" fill="#ffffff"/></svg>
<span class="t" style="left:18.2px;top:251.28px;font-size:6.05px;line-height:7.26px;color:#ffffff;letter-spacing:-0.15px;">Son</span>
<svg style="left:6.5px;top:270.64px;" width="6" height="6" viewBox="0 0 6 6"><circle cx="3" cy="3" r="2.5" fill="none" stroke="#9a9a9a" stroke-width="0.6"/><path d="M3.3 1.3 L2.2 3.2 h1.4 L2.7 4.8" fill="none" stroke="#9a9a9a" stroke-width="0.5"/></svg>
<span class="t" style="left:18.2px;top:270.06px;font-size:6.05px;line-height:7.26px;color:#5e5e5e;letter-spacing:-0.02px;">Énergie</span>
<svg style="left:6.5px;top:289.42px;" width="6" height="6" viewBox="0 0 6 6"><rect x="0.4" y="0.7" width="5.2" height="3.6" rx="0.5" fill="none" stroke="#9a9a9a" stroke-width="0.6"/><path d="M1.8 5.4 h2.4 M3 4.3 v1" stroke="#9a9a9a" stroke-width="0.6"/></svg>
<span class="t" style="left:18.2px;top:288.84px;font-size:6.05px;line-height:7.26px;color:#5e5e5e;letter-spacing:-0.15px;">Écrans</span>
<svg style="left:6.5px;top:308.2px;" width="6" height="6" viewBox="0 0 6 6"><rect x="1.3" y="0.4" width="3.4" height="5.2" rx="1.5" fill="none" stroke="#9a9a9a" stroke-width="0.6"/></svg>
<span class="t" style="left:18.2px;top:307.62px;font-size:6.05px;line-height:7.26px;color:#5e5e5e;letter-spacing:0.06px;">Souris et pavé tactile</span>
<svg style="left:6.5px;top:326.98px;" width="6" height="6" viewBox="0 0 6 6"><rect x="0.3" y="1" width="5.4" height="4" rx="0.6" fill="none" stroke="#9a9a9a" stroke-width="0.6"/><path d="M1.3 2.2 h3.4 M1.3 3.2 h3.4 M2 4.1 h2" stroke="#9a9a9a" stroke-width="0.4"/></svg>
<span class="t" style="left:18.2px;top:326.4px;font-size:6.05px;line-height:7.26px;color:#5e5e5e;letter-spacing:-0.07px;">Clavier</span>
<div style="left:0px;top:76px;width:119.4px;height:1px;background:#efefef;"></div>
<div style="left:0px;top:170px;width:119.4px;height:1px;background:#efefef;"></div>
<div style="left:0px;top:207px;width:119.4px;height:1px;background:#efefef;"></div>
<div style="left:0px;top:245px;width:119.4px;height:1px;background:#efefef;"></div>
<span class="t" style="left:146.8px;top:33.81px;font-size:5.9px;line-height:7.08px;color:#4a4a4a;font-weight:700;letter-spacing:0.12px;">Volume système</span>
<div style="left:146.6px;top:45.5px;width:234.4px;height:59.8px;background:#fff;border:0.6px solid #e7e7e7;border-radius:2.6px;"></div>
<div style="left:152.4px;top:57.45px;width:200.5px;height:1.7px;background:#f05d2a;border-radius:0.85px;"></div>
<div style="left:349.2px;top:54.6px;width:7.4px;height:7.4px;background:#fff;border-radius:50%;border:0.55px solid #c4c4c4;"></div>
<svg style="left:365.2px;top:55.3px;" width="6.4" height="6" viewBox="0 0 6.4 6"><path d="M0.3 2 h1.3 L3.3 0.5 V5.5 L1.6 4 H0.3z" fill="#6a6a6a"/><path d="M4.2 1.8 a1.8 1.8 0 0 1 0 2.4" stroke="#6a6a6a" stroke-width="0.55" fill="none"/></svg>
<div style="left:147.2px;top:71px;width:233.2px;height:1px;background:#efefef;"></div>
<span class="t" style="left:152.4px;top:76.31px;font-size:5.9px;line-height:7.08px;color:#4a4a4a;letter-spacing:0.22px;">Sur-amplification</span>
<span class="t" style="left:152.4px;top:83.5px;font-size:4.25px;line-height:5.1px;color:#ababab;letter-spacing:0.44px;">Permet d&#x27;augmenter le volume au dessus de 100 %. Cela peut entraîner une perte de</span>
<span class="t" style="left:152.4px;top:90.05px;font-size:4.25px;line-height:5.1px;color:#ababab;letter-spacing:0.42px;">qualité audio ; il est préférable d&#x27;augmenter les paramètres de volume d&#x27;application,</span>
<span class="t" style="left:152.4px;top:96.6px;font-size:4.25px;line-height:5.1px;color:#ababab;letter-spacing:-0.22px;">si possible.</span>
<div style="left:355.2px;top:83.3px;width:20.6px;height:11.2px;background:#d2d2d2;border-radius:5.6px;"></div>
<div style="left:355.7px;top:83.8px;width:10.2px;height:10.2px;background:#fff;border-radius:50%;box-shadow:0 0 0.7px rgba(0,0,0,.45);"></div>
<span class="t" style="left:146.8px;top:119.16px;font-size:5.9px;line-height:7.08px;color:#4a4a4a;font-weight:700;letter-spacing:0.13px;">Niveaux de volume</span>
<div style="left:146.6px;top:131.5px;width:234.4px;height:25.9px;background:#fff;border:0.6px solid #e7e7e7;border-radius:2.6px;"></div>
<svg style="left:152.4px;top:139.2px;" width="9.8" height="9.8" viewBox="0 0 9.8 9.8"><circle cx="4.9" cy="4.9" r="3.3" fill="none" stroke="#555" stroke-width="2"/><circle cx="4.9" cy="4.9" r="4.4" fill="none" stroke="#555" stroke-width="1.1" stroke-dasharray="1.6 1.15"/></svg>
<span class="t" style="left:165.3px;top:140.81px;font-size:5.9px;line-height:7.08px;color:#5e5e5e;letter-spacing:0.04px;">Sons système</span>
<div style="left:224.7px;top:143.4px;width:128.2px;height:1.7px;background:#f05d2a;border-radius:0.85px;"></div>
<div style="left:349.2px;top:140.55px;width:7.4px;height:7.4px;background:#fff;border-radius:50%;border:0.55px solid #c4c4c4;"></div>
<svg style="left:365.2px;top:141.25px;" width="6.4" height="6" viewBox="0 0 6.4 6"><path d="M0.3 2 h1.3 L3.3 0.5 V5.5 L1.6 4 H0.3z" fill="#6a6a6a"/><path d="M4.2 1.8 a1.8 1.8 0 0 1 0 2.4" stroke="#6a6a6a" stroke-width="0.55" fill="none"/></svg>
<span class="t" style="left:146.8px;top:170.16px;font-size:5.9px;line-height:7.08px;color:#4a4a4a;font-weight:700;letter-spacing:0.1px;">Sortie</span>
<div style="left:146.6px;top:182.75px;width:234.4px;height:60.75px;background:#fff;border:0.6px solid #e7e7e7;border-radius:2.6px;"></div>
<span class="t" style="left:152.5px;top:194.06px;font-size:5.9px;line-height:7.08px;color:#5e5e5e;letter-spacing:0.2px;">Périphérique de sortie</span>
<div style="left:219.7px;top:188.4px;width:127.3px;height:14.2px;background:#fcfcfc;border:0.6px solid #e2e2e2;border-radius:1.8px;"></div>
<svg style="left:338.4px;top:194.3px;" width="4" height="2.6" viewBox="0 0 4 2.6"><path d="M0.4 0.4 L2 2 L3.6 0.4" stroke="#b0b0b0" stroke-width="0.55" fill="none"/></svg>
<span class="t" style="left:229.5px;top:192.43px;font-size:5.7px;line-height:6.84px;color:#6a6a6a;letter-spacing:0.31px;">Dummy Output</span>
<div style="left:350.7px;top:188.4px;width:25.2px;height:14.2px;background:#fcfcfc;border:0.6px solid #d9d9d9;border-radius:1.8px;"></div>
<span class="t" style="left:357.46px;top:191.83px;font-size:5.7px;line-height:6.84px;color:#7a7a7a;">Test</span>
<div style="left:220.2px;top:206px;width:155.7px;height:1px;background:repeating-linear-gradient(to right,#b4b4b4 0 4.6px,transparent 4.6px 6.77px);"></div>
<div style="left:147.2px;top:213px;width:233.2px;height:1px;background:#efefef;"></div>
<span class="t" style="left:152.5px;top:225.16px;font-size:5.9px;line-height:7.08px;color:#5e5e5e;letter-spacing:0.05px;">Balance</span>
<div style="left:224.9px;top:224.7px;width:145.8px;height:1.1px;background:#d9d9d9;border-radius:0.5px;"></div>
<div style="left:225.5px;top:226.5px;width:0.5px;height:1.6px;background:#c0c0c0;"></div>
<div style="left:297.8px;top:226.5px;width:0.5px;height:1.6px;background:#c0c0c0;"></div>
<div style="left:370.2px;top:226.5px;width:0.5px;height:1.6px;background:#c0c0c0;"></div>
<div style="left:288.8px;top:221.3px;width:7.4px;height:7.4px;background:#fff;border-radius:50%;border:0.55px solid #c4c4c4;"></div>
<span class="t" style="left:219.7px;top:231.57px;font-size:5.3px;line-height:6.36px;color:#a8a8a8;letter-spacing:0.32px;">Gauche</span>
<span class="t" style="left:355.9px;top:231.57px;font-size:5.3px;line-height:6.36px;color:#a8a8a8;letter-spacing:0.58px;">Droite</span>
<span class="t" style="left:146.8px;top:257.06px;font-size:5.9px;line-height:7.08px;color:#4a4a4a;font-weight:700;letter-spacing:0.18px;">Entrée</span>
<div style="left:146.6px;top:269.6px;width:234.4px;height:88.4px;background:#fff;border:0.6px solid #e7e7e7;border-radius:2.6px;"></div>
<span class="t" style="left:152.5px;top:280.91px;font-size:5.9px;line-height:7.08px;color:#5e5e5e;letter-spacing:0.2px;">Périphérique d&#x27;entrée</span>
<div style="left:219.7px;top:275.6px;width:156.2px;height:13.7px;background:#fcfcfc;border:0.6px solid #e2e2e2;border-radius:1.8px;"></div>
<svg style="left:367.3px;top:281.25px;" width="4" height="2.6" viewBox="0 0 4 2.6"><path d="M0.4 0.4 L2 2 L3.6 0.4" stroke="#b0b0b0" stroke-width="0.55" fill="none"/></svg>
<div style="left:220.2px;top:293px;width:155.7px;height:1px;background:repeating-linear-gradient(to right,#b4b4b4 0 4.6px,transparent 4.6px 6.77px);"></div>
<div style="left:147.2px;top:300px;width:233.2px;height:1px;background:#efefef;"></div>
<span class="t" style="left:152.5px;top:310.01px;font-size:5.9px;line-height:7.08px;color:#5e5e5e;letter-spacing:0.27px;">Configuration</span>
<div style="left:219.7px;top:306.6px;width:156.2px;height:13.4px;background:#fcfcfc;border:0.6px solid #e2e2e2;border-radius:1.8px;"></div>
<svg style="left:367.3px;top:312.1px;" width="4" height="2.6" viewBox="0 0 4 2.6"><path d="M0.4 0.4 L2 2 L3.6 0.4" stroke="#b0b0b0" stroke-width="0.55" fill="none"/></svg>
<div style="left:147.2px;top:326px;width:233.2px;height:1px;background:#efefef;"></div>
<span class="t" style="left:152.5px;top:335.61px;font-size:5.9px;line-height:7.08px;color:#5e5e5e;letter-spacing:0.19px;">Volume</span>
<div style="left:221px;top:335.2px;width:7.4px;height:7.4px;background:#fff;border-radius:50%;border:0.55px solid #c4c4c4;"></div>
<svg style="left:368.2px;top:334.5px;" width="5" height="6" viewBox="0 0 5 6"><path d="M1 4.5 L4 1 M2 5 L4.6 2" stroke="#8a8a8a" stroke-width="0.6"/></svg>
</div>
<div style="left:25px;top:126.5px;width:305.6px;height:199.3px;background:#300a24;border-radius:4.6px 4.6px 0 0;box-shadow:0 1.5px 8px rgba(0,0,0,.42),0 0 1px rgba(0,0,0,.6);overflow:hidden">
<div style="left:0px;top:0px;width:306px;height:19.2px;background:#272727;"></div>
<div style="left:3px;top:2.9px;width:13.9px;height:13.3px;background:#3a3a3a;border-radius:1.8px;"></div>
<svg style="left:7px;top:6.3px;" width="6.2" height="6.4" viewBox="0 0 6.2 6.4"><path d="M0.5 6 V1.6 a1.1 1.1 0 0 1 1.1 -1.1 h3 a1.1 1.1 0 0 1 1.1 1.1 V6" fill="none" stroke="#e6e6e6" stroke-width="0.75"/><path d="M2 3.3 h2.2 M3.1 2.2 v2.2" stroke="#e6e6e6" stroke-width="0.65"/></svg>
<span class="t" style="left:107px;top:5.94px;font-size:6.1px;line-height:7.32px;color:#f4f4f4;font-weight:700;letter-spacing:-0.09px;">pavic@pavic-HP-ZBook-15-G3: ~</span>
<div style="left:218.8px;top:2.3px;width:13.5px;height:13.8px;background:#3a3a3a;border-radius:1.8px;"></div>
<svg style="left:222.4px;top:6.1px;" width="6.4" height="6.4" viewBox="0 0 6.4 6.4"><circle cx="2.6" cy="2.6" r="2" fill="none" stroke="#e6e6e6" stroke-width="0.8"/><path d="M4.1 4.1 L6 6" stroke="#e6e6e6" stroke-width="0.9"/></svg>
<div style="left:235.6px;top:2.3px;width:14.1px;height:13.8px;background:#3a3a3a;border-radius:1.8px;"></div>
<svg style="left:240.1px;top:6.5px;" width="5.2" height="5.4" viewBox="0 0 5.2 5.4"><path d="M0.3 0.7 h4.6 M0.3 2.7 h4.6 M0.3 4.7 h4.6" stroke="#e6e6e6" stroke-width="0.75"/></svg>
<div style="left:258.2px;top:5.1px;width:9.2px;height:9.2px;background:#3d3d3d;border-radius:50%;"></div>
<div style="left:275px;top:5.1px;width:9.2px;height:9.2px;background:#3d3d3d;border-radius:50%;"></div>
<div style="left:291.7px;top:5.1px;width:9.2px;height:9.2px;background:#3d3d3d;border-radius:50%;"></div>
<svg style="left:260.8px;top:9.5px;" width="4" height="2" viewBox="0 0 4 2"><path d="M0.5 1 h3" stroke="#f0f0f0" stroke-width="0.75"/></svg>
<svg style="left:277.4px;top:7.4px;" width="4.4" height="4.4" viewBox="0 0 4.4 4.4"><rect x="0.7" y="0.7" width="3" height="3" fill="none" stroke="#f0f0f0" stroke-width="0.75"/></svg>
<svg style="left:294.3px;top:7.6px;" width="4" height="4" viewBox="0 0 4 4"><path d="M0.6 0.6 L3.4 3.4 M3.4 0.6 L0.6 3.4" stroke="#f0f0f0" stroke-width="0.8"/></svg>
<div style="left:302px;top:20.9px;width:2.6px;height:178px;background:#cdc6cc;border-radius:1.2px;"></div>
<div style="left:1px;top:22.5px;width:116px;height:1px;background:#2b8799;"></div>
<div style="left:184px;top:22.5px;width:115px;height:1px;background:#2b8799;"></div>
<div style="left:1px;top:195.5px;width:298px;height:1px;background:#2b8799;"></div>
<div style="left:1px;top:22.5px;width:1px;height:174px;background:#2b8799;"></div>
<div style="left:298px;top:22.5px;width:1px;height:174px;background:#2b8799;"></div>
<span class="t" style="left:120px;top:19.91px;font-size:6.9px;line-height:8.28px;color:#c08c58;font-weight:700;font-family:'Liberation Mono','DejaVu Sans Mono',monospace;letter-spacing:-0.39px;">AlsaMixer v1.2.6</span>
<span class="t" style="left:15px;top:27.41px;font-size:6.9px;line-height:8.28px;color:#2aa1b3;font-weight:700;font-family:'Liberation Mono','DejaVu Sans Mono',monospace;letter-spacing:-0.39px;">Carte :</span>
<span class="t" style="left:45px;top:27.41px;font-size:6.9px;line-height:8.28px;color:#c08c58;font-weight:700;font-family:'Liberation Mono','DejaVu Sans Mono',monospace;letter-spacing:-0.39px;">HDA Intel PCH</span>
<span class="t" style="left:18.75px;top:34.91px;font-size:6.9px;line-height:8.28px;color:#2aa1b3;font-weight:700;font-family:'Liberation Mono','DejaVu Sans Mono',monospace;letter-spacing:-0.39px;">Puce :</span>
<span class="t" style="left:45px;top:34.91px;font-size:6.9px;line-height:8.28px;color:#c08c58;font-weight:700;font-family:'Liberation Mono','DejaVu Sans Mono',monospace;letter-spacing:-0.39px;">Conexant CX20724</span>
<span class="t" style="left:22.5px;top:42.41px;font-size:6.9px;line-height:8.28px;color:#2aa1b3;font-weight:700;font-family:'Liberation Mono','DejaVu Sans Mono',monospace;letter-spacing:-0.39px;">Vue :</span>
<span class="t" style="left:45px;top:42.41px;font-size:6.9px;line-height:8.28px;color:#2aa1b3;font-weight:700;font-family:'Liberation Mono','DejaVu Sans Mono',monospace;letter-spacing:-0.39px;">F3:</span>
<span class="t" style="left:56.25px;top:42.41px;font-size:6.9px;line-height:8.28px;color:#c08c58;font-weight:700;font-family:'Liberation Mono','DejaVu Sans Mono',monospace;letter-spacing:-0.39px;">[Lecture]</span>
<span class="t" style="left:93.75px;top:42.41px;font-size:6.9px;line-height:8.28px;color:#2aa1b3;font-weight:700;font-family:'Liberation Mono','DejaVu Sans Mono',monospace;letter-spacing:-0.39px;">F4: Capture</span>
<span class="t" style="left:142.5px;top:42.41px;font-size:6.9px;line-height:8.28px;color:#2aa1b3;font-weight:700;font-family:'Liberation Mono','DejaVu Sans Mono',monospace;letter-spacing:-0.39px;">F5: Tout</span>
<span class="t" style="left:7.5px;top:49.91px;font-size:6.9px;line-height:8.28px;color:#2aa1b3;font-weight:700;font-family:'Liberation Mono','DejaVu Sans Mono',monospace;letter-spacing:-0.39px;">Élément :</span>
<span class="t" style="left:45px;top:49.91px;font-size:6.9px;line-height:8.28px;color:#c08c58;font-weight:700;font-family:'Liberation Mono','DejaVu Sans Mono',monospace;letter-spacing:-0.39px;">Master [gain dB : -20,00]</span>
<span class="t" style="left:195px;top:27.41px;font-size:6.9px;line-height:8.28px;color:#2891a2;font-weight:700;font-family:'Liberation Mono','DejaVu Sans Mono',monospace;letter-spacing:-0.39px;">F1 :</span>
<span class="t" style="left:217.5px;top:27.41px;font-size:6.9px;line-height:8.28px;color:#2aa1b3;font-weight:700;font-family:'Liberation Mono','DejaVu Sans Mono',monospace;letter-spacing:-0.39px;">Aide</span>
<span class="t" style="left:195px;top:34.91px;font-size:6.9px;line-height:8.28px;color:#2891a2;font-weight:700;font-family:'Liberation Mono','DejaVu Sans Mono',monospace;letter-spacing:-0.39px;">F2 :</span>
<span class="t" style="left:217.5px;top:34.91px;font-size:6.9px;line-height:8.28px;color:#2aa1b3;font-weight:700;font-family:'Liberation Mono','DejaVu Sans Mono',monospace;letter-spacing:-0.39px;">Informations système</span>
<span class="t" style="left:195px;top:42.41px;font-size:6.9px;line-height:8.28px;color:#2891a2;font-weight:700;font-family:'Liberation Mono','DejaVu Sans Mono',monospace;letter-spacing:-0.39px;">F6 :</span>
<span class="t" style="left:217.5px;top:42.41px;font-size:6.9px;line-height:8.28px;color:#2aa1b3;font-weight:700;font-family:'Liberation Mono','DejaVu Sans Mono',monospace;letter-spacing:-0.39px;">Choisir la carte son</span>
<span class="t" style="left:195px;top:49.91px;font-size:6.9px;line-height:8.28px;color:#2891a2;font-weight:700;font-family:'Liberation Mono','DejaVu Sans Mono',monospace;letter-spacing:-0.39px;">Esc :</span>
<span class="t" style="left:217.5px;top:49.91px;font-size:6.9px;line-height:8.28px;color:#2aa1b3;font-weight:700;font-family:'Liberation Mono','DejaVu Sans Mono',monospace;letter-spacing:-0.39px;">quitter</span>
<div style="left:15px;top:184.5px;width:30px;height:7.5px;background:#12488b;"></div>
<span class="t" style="left:18.75px;top:184.91px;font-size:6.9px;line-height:8.28px;color:#c01c28;font-weight:700;font-family:'Liberation Mono','DejaVu Sans Mono',monospace;letter-spacing:-0.39px;">Master</span>
<span class="t" style="left:11.25px;top:184.91px;font-size:6.9px;line-height:8.28px;color:#c01c28;font-weight:700;font-family:'Liberation Mono','DejaVu Sans Mono',monospace;letter-spacing:-0.39px;">&lt;</span>
<span class="t" style="left:45px;top:184.91px;font-size:6.9px;line-height:8.28px;color:#c01c28;font-weight:700;font-family:'Liberation Mono','DejaVu Sans Mono',monospace;letter-spacing:-0.39px;">&gt;</span>
<span class="t" style="left:26.25px;top:177.41px;font-size:6.9px;line-height:8.28px;color:#c08c58;font-weight:700;font-family:'Liberation Mono','DejaVu Sans Mono',monospace;letter-spacing:-0.39px;">43</span>
<div style="left:24px;top:67.5px;width:1px;height:91px;background:#2b8799;"></div>
<div style="left:35px;top:67.5px;width:1px;height:91px;background:#2b8799;"></div>
<div style="left:24px;top:67.5px;width:12px;height:1px;background:#2b8799;"></div>
<div style="left:24px;top:157.5px;width:12px;height:1px;background:#2b8799;"></div>
<div style="left:26.25px;top:117px;width:7.5px;height:37.5px;background:#26a269;"></div>
<div style="left:24px;top:157.5px;width:1px;height:16px;background:#2b8799;"></div>
<div style="left:35px;top:157.5px;width:1px;height:16px;background:#2b8799;"></div>
<div style="left:24px;top:172.5px;width:12px;height:1px;background:#2b8799;"></div>
<div style="left:26.25px;top:162px;width:7.5px;height:7.5px;background:#26a269;"></div>
<span class="t" style="left:26.25px;top:162.41px;font-size:6.9px;line-height:8.28px;color:#dff3e8;font-weight:700;font-family:'Liberation Mono','DejaVu Sans Mono',monospace;letter-spacing:-0.39px;">OO</span>
<div style="left:48.75px;top:184.5px;width:30px;height:7.5px;background:#12488b;"></div>
<span class="t" style="left:48.75px;top:184.91px;font-size:6.9px;line-height:8.28px;color:#f4f4f4;font-weight:700;font-family:'Liberation Mono','DejaVu Sans Mono',monospace;letter-spacing:-0.39px;">Headphon</span>
<span class="t" style="left:48.75px;top:177.41px;font-size:6.9px;line-height:8.28px;color:#c08c58;font-weight:700;font-family:'Liberation Mono','DejaVu Sans Mono',monospace;letter-spacing:-0.39px;">100</span>
<span class="t" style="left:60px;top:177.41px;font-size:6.9px;line-height:8.28px;color:#2aa1b3;font-weight:700;font-family:'Liberation Mono','DejaVu Sans Mono',monospace;letter-spacing:-0.39px;">&lt;&gt;</span>
<span class="t" style="left:67.5px;top:177.41px;font-size:6.9px;line-height:8.28px;color:#c08c58;font-weight:700;font-family:'Liberation Mono','DejaVu Sans Mono',monospace;letter-spacing:-0.39px;">100</span>
<div style="left:58px;top:67.5px;width:1px;height:91px;background:#2b8799;"></div>
<div style="left:69px;top:67.5px;width:1px;height:91px;background:#2b8799;"></div>
<div style="left:58px;top:67.5px;width:12px;height:1px;background:#2b8799;"></div>
<div style="left:58px;top:157.5px;width:12px;height:1px;background:#2b8799;"></div>
<div style="left:60px;top:72px;width:7.5px;height:15px;background:#c01c28;"></div>
<div style="left:60px;top:87px;width:7.5px;height:30px;background:#d6d5d2;"></div>
<div style="left:60px;top:117px;width:7.5px;height:37.5px;background:#26a269;"></div>
<div style="left:58px;top:157.5px;width:1px;height:16px;background:#2b8799;"></div>
<div style="left:69px;top:157.5px;width:1px;height:16px;background:#2b8799;"></div>
<div style="left:58px;top:172.5px;width:12px;height:1px;background:#2b8799;"></div>
<div style="left:60px;top:162px;width:7.5px;height:7.5px;background:#26a269;"></div>
<span class="t" style="left:60px;top:162.41px;font-size:6.9px;line-height:8.28px;color:#dff3e8;font-weight:700;font-family:'Liberation Mono','DejaVu Sans Mono',monospace;letter-spacing:-0.39px;">OO</span>
<div style="left:82.5px;top:184.5px;width:30px;height:7.5px;background:#12488b;"></div>
<span class="t" style="left:82.5px;top:184.91px;font-size:6.9px;line-height:8.28px;color:#f4f4f4;font-weight:700;font-family:'Liberation Mono','DejaVu Sans Mono',monospace;letter-spacing:-0.39px;">Speaker</span>
<span class="t" style="left:82.5px;top:177.41px;font-size:6.9px;line-height:8.28px;color:#c08c58;font-weight:700;font-family:'Liberation Mono','DejaVu Sans Mono',monospace;letter-spacing:-0.39px;">100</span>
<span class="t" style="left:93.75px;top:177.41px;font-size:6.9px;line-height:8.28px;color:#2aa1b3;font-weight:700;font-family:'Liberation Mono','DejaVu Sans Mono',monospace;letter-spacing:-0.39px;">&lt;&gt;</span>
<span class="t" style="left:101.25px;top:177.41px;font-size:6.9px;line-height:8.28px;color:#c08c58;font-weight:700;font-family:'Liberation Mono','DejaVu Sans Mono',monospace;letter-spacing:-0.39px;">100</span>
<div style="left:91px;top:67.5px;width:1px;height:91px;background:#2b8799;"></div>
<div style="left:103px;top:67.5px;width:1px;height:91px;background:#2b8799;"></div>
<div style="left:91px;top:67.5px;width:13px;height:1px;background:#2b8799;"></div>
<div style="left:91px;top:157.5px;width:13px;height:1px;background:#2b8799;"></div>
<div style="left:93.75px;top:72px;width:7.5px;height:15px;background:#c01c28;"></div>
<div style="left:93.75px;top:87px;width:7.5px;height:30px;background:#d6d5d2;"></div>
<div style="left:93.75px;top:117px;width:7.5px;height:37.5px;background:#26a269;"></div>
<div style="left:91px;top:157.5px;width:1px;height:16px;background:#2b8799;"></div>
<div style="left:103px;top:157.5px;width:1px;height:16px;background:#2b8799;"></div>
<div style="left:91px;top:172.5px;width:13px;height:1px;background:#2b8799;"></div>
<div style="left:93.75px;top:162px;width:7.5px;height:7.5px;background:#26a269;"></div>
<span class="t" style="left:93.75px;top:162.41px;font-size:6.9px;line-height:8.28px;color:#dff3e8;font-weight:700;font-family:'Liberation Mono','DejaVu Sans Mono',monospace;letter-spacing:-0.39px;">OO</span>
<div style="left:116.25px;top:184.5px;width:30px;height:7.5px;background:#12488b;"></div>
<span class="t" style="left:123.75px;top:184.91px;font-size:6.9px;line-height:8.28px;color:#f4f4f4;font-weight:700;font-family:'Liberation Mono','DejaVu Sans Mono',monospace;letter-spacing:-0.39px;">PCM</span>
<span class="t" style="left:116.25px;top:177.41px;font-size:6.9px;line-height:8.28px;color:#c08c58;font-weight:700;font-family:'Liberation Mono','DejaVu Sans Mono',monospace;letter-spacing:-0.39px;">100</span>
<span class="t" style="left:127.5px;top:177.41px;font-size:6.9px;line-height:8.28px;color:#2aa1b3;font-weight:700;font-family:'Liberation Mono','DejaVu Sans Mono',monospace;letter-spacing:-0.39px;">&lt;&gt;</span>
<span class="t" style="left:135px;top:177.41px;font-size:6.9px;line-height:8.28px;color:#c08c58;font-weight:700;font-family:'Liberation Mono','DejaVu Sans Mono',monospace;letter-spacing:-0.39px;">100</span>
<div style="left:125px;top:67.5px;width:1px;height:91px;background:#2b8799;"></div>
<div style="left:136px;top:67.5px;width:1px;height:91px;background:#2b8799;"></div>
<div style="left:125px;top:67.5px;width:12px;height:1px;background:#2b8799;"></div>
<div style="left:125px;top:157.5px;width:12px;height:1px;background:#2b8799;"></div>
<div style="left:127.5px;top:72px;width:7.5px;height:15px;background:#c01c28;"></div>
<div style="left:127.5px;top:87px;width:7.5px;height:30px;background:#d6d5d2;"></div>
<div style="left:127.5px;top:117px;width:7.5px;height:37.5px;background:#26a269;"></div>
<div style="left:150px;top:184.5px;width:30px;height:7.5px;background:#12488b;"></div>
<span class="t" style="left:150px;top:184.91px;font-size:6.9px;line-height:8.28px;color:#f4f4f4;font-weight:700;font-family:'Liberation Mono','DejaVu Sans Mono',monospace;letter-spacing:-0.39px;">Mic Boos</span>
<span class="t" style="left:157.5px;top:177.41px;font-size:6.9px;line-height:8.28px;color:#c08c58;font-weight:700;font-family:'Liberation Mono','DejaVu Sans Mono',monospace;letter-spacing:-0.39px;">0</span>
<span class="t" style="left:161.25px;top:177.41px;font-size:6.9px;line-height:8.28px;color:#2aa1b3;font-weight:700;font-family:'Liberation Mono','DejaVu Sans Mono',monospace;letter-spacing:-0.39px;">&lt;&gt;</span>
<span class="t" style="left:168.75px;top:177.41px;font-size:6.9px;line-height:8.28px;color:#c08c58;font-weight:700;font-family:'Liberation Mono','DejaVu Sans Mono',monospace;letter-spacing:-0.39px;">0</span>
<div style="left:159px;top:67.5px;width:1px;height:91px;background:#2b8799;"></div>
<div style="left:170px;top:67.5px;width:1px;height:91px;background:#2b8799;"></div>
<div style="left:159px;top:67.5px;width:12px;height:1px;background:#2b8799;"></div>
<div style="left:159px;top:157.5px;width:12px;height:1px;background:#2b8799;"></div>
<div style="left:183.75px;top:184.5px;width:30px;height:7.5px;background:#12488b;"></div>
<span class="t" style="left:191.25px;top:184.91px;font-size:6.9px;line-height:8.28px;color:#f4f4f4;font-weight:700;font-family:'Liberation Mono','DejaVu Sans Mono',monospace;letter-spacing:-0.39px;">Beep</span>
<span class="t" style="left:195px;top:177.41px;font-size:6.9px;line-height:8.28px;color:#c08c58;font-weight:700;font-family:'Liberation Mono','DejaVu Sans Mono',monospace;letter-spacing:-0.39px;">30</span>
<div style="left:193px;top:67.5px;width:1px;height:91px;background:#2b8799;"></div>
<div style="left:204px;top:67.5px;width:1px;height:91px;background:#2b8799;"></div>
<div style="left:193px;top:67.5px;width:12px;height:1px;background:#2b8799;"></div>
<div style="left:193px;top:157.5px;width:12px;height:1px;background:#2b8799;"></div>
<div style="left:195px;top:132px;width:7.5px;height:22.5px;background:#26a269;"></div>
<div style="left:193px;top:157.5px;width:1px;height:16px;background:#2b8799;"></div>
<div style="left:204px;top:157.5px;width:1px;height:16px;background:#2b8799;"></div>
<div style="left:193px;top:172.5px;width:12px;height:1px;background:#2b8799;"></div>
<div style="left:195px;top:162px;width:7.5px;height:7.5px;background:#26a269;"></div>
<span class="t" style="left:195px;top:162.41px;font-size:6.9px;line-height:8.28px;color:#dff3e8;font-weight:700;font-family:'Liberation Mono','DejaVu Sans Mono',monospace;letter-spacing:-0.39px;">OO</span>
<div style="left:217.5px;top:184.5px;width:30px;height:7.5px;background:#12488b;"></div>
<span class="t" style="left:217.5px;top:184.91px;font-size:6.9px;line-height:8.28px;color:#f4f4f4;font-weight:700;font-family:'Liberation Mono','DejaVu Sans Mono',monospace;letter-spacing:-0.39px;">Auto-Mut</span>
<div style="left:251.25px;top:184.5px;width:30px;height:7.5px;background:#12488b;"></div>
<span class="t" style="left:251.25px;top:184.91px;font-size:6.9px;line-height:8.28px;color:#f4f4f4;font-weight:700;font-family:'Liberation Mono','DejaVu Sans Mono',monospace;letter-spacing:-0.39px;">Internal</span>
<span class="t" style="left:258.75px;top:177.41px;font-size:6.9px;line-height:8.28px;color:#c08c58;font-weight:700;font-family:'Liberation Mono','DejaVu Sans Mono',monospace;letter-spacing:-0.39px;">0</span>
<span class="t" style="left:262.5px;top:177.41px;font-size:6.9px;line-height:8.28px;color:#2aa1b3;font-weight:700;font-family:'Liberation Mono','DejaVu Sans Mono',monospace;letter-spacing:-0.39px;">&lt;&gt;</span>
<span class="t" style="left:270px;top:177.41px;font-size:6.9px;line-height:8.28px;color:#c08c58;font-weight:700;font-family:'Liberation Mono','DejaVu Sans Mono',monospace;letter-spacing:-0.39px;">0</span>
<div style="left:260px;top:67.5px;width:1px;height:91px;background:#2b8799;"></div>
<div style="left:271px;top:67.5px;width:1px;height:91px;background:#2b8799;"></div>
<div style="left:260px;top:67.5px;width:12px;height:1px;background:#2b8799;"></div>
<div style="left:260px;top:157.5px;width:12px;height:1px;background:#2b8799;"></div>
<span class="t" style="left:217.5px;top:154.91px;font-size:6.9px;line-height:8.28px;color:#c08c58;font-weight:700;font-family:'Liberation Mono','DejaVu Sans Mono',monospace;letter-spacing:-0.39px;">Disabled</span>
</div>
<div style="left:0px;top:430px;width:800px;height:19px;background:linear-gradient(to right,#2b1826 0%,#2f1a27 42%,#3a1d24 64%,#46221f 86%,#3f1f1f 100%);"></div>
<svg style="left:5.7px;top:434.5px;" width="9.8" height="9.8" viewBox="0 0 9.8 9.8"><defs><linearGradient id="ffg" x1="0.2" y1="0" x2="0.6" y2="1"><stop offset="0" stop-color="#ff7a2a"/><stop offset="0.55" stop-color="#ff9a1e"/><stop offset="1" stop-color="#ffd23a"/></linearGradient></defs><circle cx="4.9" cy="5" r="4.7" fill="url(#ffg)"/><circle cx="5.6" cy="4" r="2.7" fill="#7a3fe0"/><path d="M1 2.2 C2.6 3.6 2.2 5.6 4.4 6.4 C6.4 7 7.8 5.6 8.2 4.2 C9.4 6.4 7.8 9.4 4.9 9.6 C1.4 9.4 -0.6 5.6 1 2.2z" fill="#ff8a1e"/><path d="M6 1 C7.4 1.6 8.4 2.8 8.2 4.4 C7.6 3.2 6.8 3 6 3z" fill="#ffb02a"/></svg>
<div style="left:9.5px;top:446.2px;width:2.2px;height:2px;background:#f05a2a;border-radius:50%;"></div>
<svg style="left:24px;top:435px;" width="10" height="8.8" viewBox="0 0 10 8.8"><rect x="0" y="0.6" width="10" height="8.2" rx="0.9" fill="#9a9894"/><rect x="0" y="0.6" width="10" height="2.2" rx="0.8" fill="#b0504a"/><rect x="0.8" y="3" width="8.4" height="5" fill="#c4c2bd"/><rect x="3.4" y="4.6" width="3.2" height="0.8" fill="#8a8884"/></svg>
<svg style="left:42.5px;top:434.9px;" width="10" height="9" viewBox="0 0 10 9"><path d="M3.6 1.2 a1.4 1.4 0 0 1 2.8 0" fill="none" stroke="#f0a080" stroke-width="0.7"/><rect x="0" y="1.2" width="10" height="7.8" rx="1" fill="#ee6a28"/><path d="M5 2.6 L2.8 7.6 M5 2.6 L7.2 7.6 M3.4 6 H6.6" stroke="#fff" stroke-width="0.95" fill="none"/></svg>
<svg style="left:60.5px;top:435.1px;" width="11" height="8.6" viewBox="0 0 11 8.6"><path d="M1 7.8 V5 a4.5 4.5 0 0 1 9 0 V7.8" fill="none" stroke="#1432d8" stroke-width="1.5"/><rect x="3.3" y="3.8" width="4.4" height="3.8" rx="1" fill="#e8442a"/><rect x="4" y="4.9" width="3" height="1.4" fill="#f5a020"/></svg>
<svg style="left:80.8px;top:435.2px;" width="6.4" height="8.4" viewBox="0 0 6.4 8.4"><path d="M3.2 0.2 C4.4 2.4 6.2 3.8 6.2 5.6 a3 2.8 0 0 1 -6 0 C0.2 3.8 2 2.4 3.2 0.2z" fill="#ee7a22"/><ellipse cx="3.2" cy="6" rx="1.6" ry="1.7" fill="#f8c058"/></svg>
<svg style="left:97.6px;top:434.5px;" width="9.8" height="9.8" viewBox="0 0 9.8 9.8"><circle cx="4.9" cy="4.9" r="4.8" fill="#15386c"/><path d="M0.4 5.6 L3.6 6.8 L6 4.4" stroke="#f2f4f8" stroke-width="1.5" fill="none" stroke-linecap="round"/><circle cx="6.6" cy="3.6" r="1.5" fill="none" stroke="#f2f4f8" stroke-width="0.9"/></svg>
<svg style="left:115.5px;top:435.9px;" width="9.6" height="6" viewBox="0 0 9.6 6"><path d="M0.2 2.2 L5.6 0.4 L6.6 2.6 L9.4 5.6 L6 4.4 L4.6 3.4 Z" fill="#a3966a"/></svg>
<svg style="left:134.4px;top:434.4px;" width="10" height="10" viewBox="0 0 10 10"><defs><linearGradient id="glb" x1="0" y1="0" x2="0" y2="1"><stop offset="0" stop-color="#e8eef6"/><stop offset="0.45" stop-color="#5a8fd6"/><stop offset="0.6" stop-color="#0c1c3c"/><stop offset="1" stop-color="#5f9ae0"/></linearGradient></defs><circle cx="5" cy="5" r="4.9" fill="url(#glb)"/><path d="M1 3.4 C3 1.4 6.6 1.6 8.6 3.2 C6.6 2.8 3 3 1 3.4z" fill="#fff"/></svg>
<svg style="left:153.4px;top:434.7px;" width="8.2" height="9.4" viewBox="0 0 8.2 9.4"><rect x="0" y="0" width="8.2" height="9.4" rx="0.8" fill="#5c5a5c"/><rect x="3.1" y="1.2" width="2" height="3" fill="#e4e4e4"/><rect x="3.6" y="4.2" width="1" height="3.6" fill="#bdbdbd"/></svg>
<svg style="left:171.9px;top:434.7px;" width="8.2" height="9.4" viewBox="0 0 8.2 9.4"><rect x="0" y="0" width="8.2" height="9.4" rx="0.8" fill="#5c5a5c"/><rect x="3.1" y="1.2" width="2" height="3" fill="#e4e4e4"/><rect x="3.6" y="4.2" width="1" height="3.6" fill="#bdbdbd"/></svg>
<svg style="left:191px;top:434.5px;" width="6.6" height="9.8" viewBox="0 0 6.6 9.8"><rect x="0" y="0" width="6.6" height="6" rx="0.8" fill="#12a8dc"/><circle cx="3.3" cy="2.2" r="1" fill="#0a4a66"/><rect x="1.2" y="6" width="4.2" height="3.6" fill="#a8b0b4"/></svg>
<svg style="left:207.8px;top:434.4px;" width="10" height="10" viewBox="0 0 10 10"><circle cx="5" cy="5" r="4.9" fill="#f0857a"/><path d="M5 5 L9.6 3.4 A4.9 4.9 0 0 1 9 7.8z" fill="#5a8ff0"/><path d="M5 5 L9 7.8 A4.9 4.9 0 0 1 5.6 9.86z" fill="#e8c83a"/><path d="M5 5 L5.6 9.86 A4.9 4.9 0 0 1 2.6 9.3z" fill="#5ac05a"/></svg>
<svg style="left:226.9px;top:434.5px;" width="8.2" height="9.8" viewBox="0 0 8.2 9.8"><rect x="0" y="0" width="8.2" height="9.8" rx="0.8" fill="#e8487e"/><rect x="3.6" y="0" width="1.6" height="9.8" fill="#f59ab8"/><rect x="0" y="7.6" width="8.2" height="2.2" fill="#f07aa0" opacity=".8"/></svg>
<svg style="left:244.9px;top:435px;" width="9" height="7.6" viewBox="0 0 9 7.6"><path d="M4.5 0.2 L8.8 7.4 L4.5 4.8 L0.2 7.4 Z" fill="#d8143f"/></svg>
<svg style="left:262.5px;top:434.4px;" width="9.8" height="10" viewBox="0 0 9.8 10"><rect x="0" y="0" width="9.8" height="10" rx="0.9" fill="#6c94f2"/><rect x="2" y="2" width="5.8" height="6" fill="#7ea2f6"/></svg>
<div style="left:276.8px;top:433.8px;width:0.7px;height:11.2px;background:#6a5f66;"></div>
<svg style="left:281.9px;top:434.1px;" width="10" height="10" viewBox="0 0 10 10"><circle cx="5" cy="5" r="4.9" fill="#8f8f8f"/><circle cx="5" cy="5" r="3.4" fill="none" stroke="#c9c9c9" stroke-width="0.9"/><circle cx="5" cy="5" r="1.6" fill="none" stroke="#c9c9c9" stroke-width="0.8"/></svg>
<div style="left:285.8px;top:446.2px;width:2.2px;height:2px;background:#f05a2a;border-radius:50%;"></div>
<div style="left:297.5px;top:431px;width:16px;height:15.6px;background:rgba(255,255,255,.17);border-radius:3px;"></div>
<svg style="left:300.6px;top:434.8px;" width="10" height="9.2" viewBox="0 0 10 9.2"><rect x="0" y="0" width="10" height="9.2" rx="1" fill="#4a4649"/><rect x="0" y="0" width="10" height="1.6" rx="0.8" fill="#5e5a5d"/><path d="M1.6 3.2 L3.8 4.8 L1.6 6.2" stroke="#f0f0f0" stroke-width="0.8" fill="none"/><path d="M4.6 6.6 h2.4" stroke="#ddd" stroke-width="0.6"/></svg>
<div style="left:304.5px;top:446.4px;width:2.2px;height:2px;background:#f05a2a;border-radius:50%;"></div>
<svg style="left:320px;top:434.5px;" width="7.8" height="9.8" viewBox="0 0 7.8 9.8"><rect x="0" y="0" width="7.8" height="9.8" rx="0.7" fill="#cfcfc8"/><path d="M1.4 2.2 h5 M1.4 3.8 h5 M1.4 5.4 h3.6 M1.4 7 h4.4" stroke="#8f8f88" stroke-width="0.55"/></svg>
<svg style="left:338.1px;top:434.5px;" width="8.2" height="9.8" viewBox="0 0 8.2 9.8"><rect x="0.3" y="1" width="7.6" height="8.8" rx="1" fill="#e6e8e4"/><rect x="0" y="0" width="8.2" height="1.8" rx="0.6" fill="#cfd2cc"/><circle cx="4.1" cy="5.6" r="2" fill="#5cb85c"/><circle cx="4.1" cy="5.6" r="0.9" fill="#e6e8e4"/></svg>
<svg style="left:785.8px;top:436.2px;" width="6.8" height="6.8" viewBox="0 0 6.8 6.8"><rect x="0.2" y="0.2" width="1.5" height="1.5" fill="#dcd6d6"/><rect x="0.2" y="2.65" width="1.5" height="1.5" fill="#dcd6d6"/><rect x="0.2" y="5.1" width="1.5" height="1.5" fill="#dcd6d6"/><rect x="2.65" y="0.2" width="1.5" height="1.5" fill="#dcd6d6"/><rect x="2.65" y="2.65" width="1.5" height="1.5" fill="#dcd6d6"/><rect x="2.65" y="5.1" width="1.5" height="1.5" fill="#dcd6d6"/><rect x="5.1" y="0.2" width="1.5" height="1.5" fill="#dcd6d6"/><rect x="5.1" y="2.65" width="1.5" height="1.5" fill="#dcd6d6"/><rect x="5.1" y="5.1" width="1.5" height="1.5" fill="#dcd6d6"/></svg>
</div></body></html>
